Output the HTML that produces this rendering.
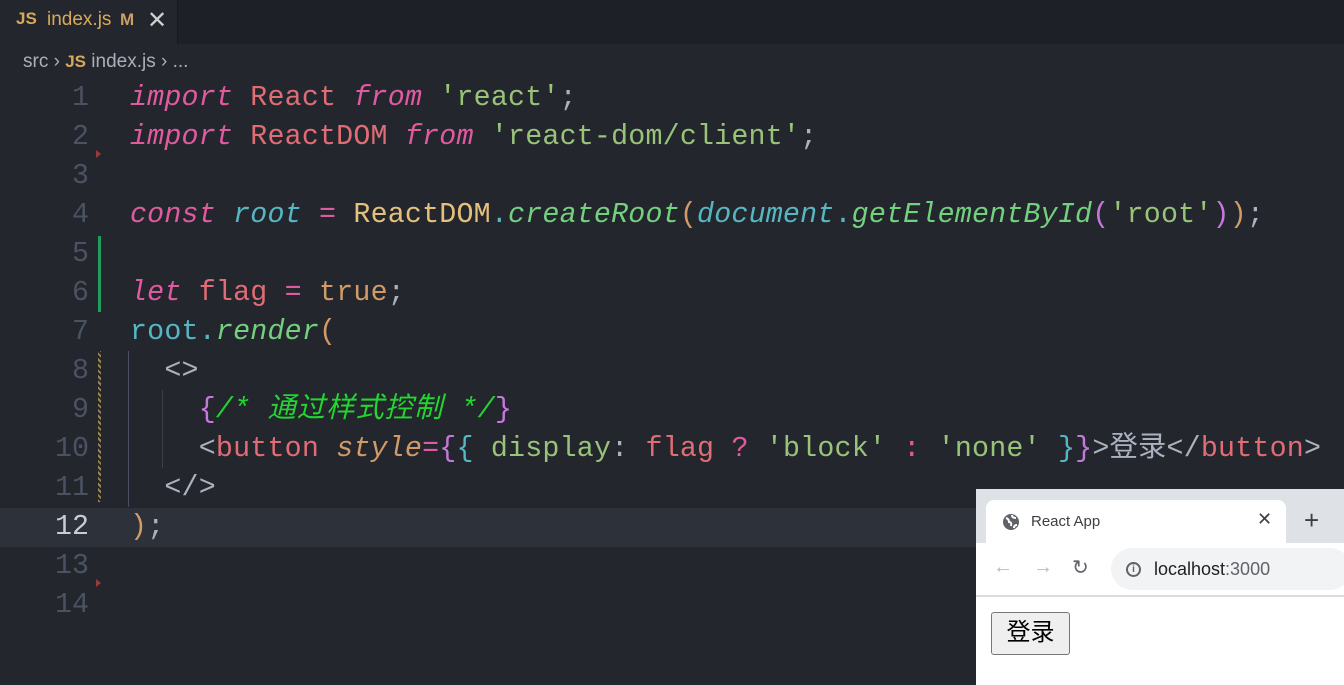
<!DOCTYPE html>
<html><head><meta charset="utf-8"><style>
*{margin:0;padding:0;box-sizing:border-box}
body{width:1344px;height:685px;background:#23262d;overflow:hidden;position:relative;font-family:"Liberation Sans","Noto Sans CJK SC",sans-serif}
.tabbar{position:absolute;left:0;top:0;width:1344px;height:44px;background:#1d2026}
.tab{position:absolute;left:0;top:0;width:178px;height:45px;background:#23262d;border-right:1px solid #181a1f;color:#d7a65f;font-size:19px}
.tab .js{position:absolute;left:16px;top:9px;font-weight:bold;color:#d9a95a;font-size:17px}
.tab .n{position:absolute;left:47px;top:9px;color:#d9a95a;font-size:19px}
.tab .m{position:absolute;left:120px;top:10px;font-weight:bold;color:#c8a068;font-size:17px}
.tab .x{position:absolute;left:147px;top:6px;color:#d0d0d0;font-size:24px}
.crumb{position:absolute;left:23px;top:51px;font-size:19px;color:#a9b0bb}
.crumb b{color:#d9a95a;font-size:17px}
.code{position:absolute;left:0;top:79px;width:1344px;font-family:"Liberation Mono","Noto Sans CJK SC",monospace;font-size:28.3px}
.ln{height:39px;line-height:39px;white-space:pre;position:relative}
.ln .num{position:absolute;left:0;width:89px;text-align:right;color:#4b5263;letter-spacing:0}
.ln .t{position:absolute;left:130px;color:#abb2bf;letter-spacing:0.2px}
.hl{background:#2c313a}
.hl .num{color:#c8ccd4}
.k{color:#e05aa0;font-style:italic}.v{color:#e06c75}.s{color:#98c379}.c{color:#e5c07b}
.f{color:#72d07f;font-style:italic}.d{color:#56b6c2;font-style:italic}.r{color:#56b6c2}
.o{color:#d19a66}.p{color:#c678dd}.g{color:#abb2bf}.cm{color:#22d62f;font-style:italic}
.at{color:#d19a66;font-style:italic}.tg{color:#e06c75}.eq{color:#e05aa0}
.cj{letter-spacing:1px}
.browser{position:absolute;left:976px;top:489px;width:368px;height:196px;background:#fff}
</style></head><body>
<div class="tabbar"></div>
<div class="tab"><span class="js">JS</span><span class="n">index.js</span><span class="m">M</span><span class="x">✕</span></div>
<div class="crumb">src › <b>JS</b> index.js › ...</div>
<div style="position:absolute;left:98px;top:236px;width:3px;height:76px;background:#1f9d5c"></div>
<div style="position:absolute;left:98px;top:351px;width:3px;height:151px;background:repeating-linear-gradient(45deg,#9a8650 0 2px,#23262d 2px 4px)"></div>
<div style="position:absolute;left:128px;top:351px;width:1px;height:156px;background:#4b5060"></div>
<div style="position:absolute;left:162px;top:390px;width:1px;height:78px;background:#3b3f4a"></div>
<div style="position:absolute;left:96px;top:150px;width:0;height:0;border-left:5px solid #9b3a3a;border-top:4px solid transparent;border-bottom:4px solid transparent"></div>
<div style="position:absolute;left:96px;top:579px;width:0;height:0;border-left:5px solid #9b3a3a;border-top:4px solid transparent;border-bottom:4px solid transparent"></div>
<div class="code">
<div class="ln"><span class="num">1</span><span class="t"><span class="k">import</span> <span class="v">React</span> <span class="k">from</span> <span class="s">'react'</span>;</span></div>
<div class="ln"><span class="num">2</span><span class="t"><span class="k">import</span> <span class="v">ReactDOM</span> <span class="k">from</span> <span class="s">'react-dom/client'</span>;</span></div>
<div class="ln"><span class="num">3</span></div>
<div class="ln"><span class="num">4</span><span class="t"><span class="k">const</span> <span class="d">root</span> <span class="eq">=</span> <span class="c">ReactDOM</span><span class="r">.</span><span class="f">createRoot</span><span class="o">(</span><span class="d">document</span><span class="r">.</span><span class="f">getElementById</span><span class="p">(</span><span class="s">'root'</span><span class="p">)</span><span class="o">)</span>;</span></div>
<div class="ln"><span class="num">5</span></div>
<div class="ln"><span class="num">6</span><span class="t"><span class="k">let</span> <span class="v">flag</span> <span class="eq">=</span> <span class="o">true</span>;</span></div>
<div class="ln"><span class="num">7</span><span class="t"><span class="r">root</span><span class="r">.</span><span class="f">render</span><span class="o">(</span></span></div>
<div class="ln"><span class="num">8</span><span class="t">  <span class="g">&lt;&gt;</span></span></div>
<div class="ln"><span class="num">9</span><span class="t">    <span class="p">{</span><span class="cm">/* <span class="cj">通过样式控制</span> */</span><span class="p">}</span></span></div>
<div class="ln"><span class="num">10</span><span class="t">    <span class="g">&lt;</span><span class="tg">button</span> <span class="at">style</span><span class="eq">=</span><span class="p">{</span><span class="r">{</span> <span class="s">display</span><span class="g">:</span> <span class="v">flag</span> <span class="eq">?</span> <span class="s">'block'</span> <span class="eq">:</span> <span class="s">'none'</span> <span class="r">}</span><span class="p">}</span><span class="g">&gt;</span>登录<span class="g">&lt;/</span><span class="tg">button</span><span class="g">&gt;</span></span></div>
<div class="ln"><span class="num">11</span><span class="t">  <span class="g">&lt;/&gt;</span></span></div>
<div class="ln hl"><span class="num">12</span><span class="t"><span class="o">)</span>;</span></div>
<div class="ln"><span class="num">13</span></div>
<div class="ln"><span class="num">14</span></div>
</div>
<div class="browser">
<div style="position:absolute;left:0;top:0;width:368px;height:54px;background:#dee1e6"></div>
<div style="position:absolute;left:10px;top:11px;width:300px;height:44px;background:#fff;border-radius:8px 8px 0 0"></div>
<svg style="position:absolute;left:26px;top:24px" width="18" height="18" viewBox="0 0 18 18"><circle cx="9" cy="9" r="8" fill="#5f6368"/><path d="M4 5 q3 1 3 4 q3 0 2 4 M10 2 q0 3 4 3 M12 15 q0-3 3-3" stroke="#fff" stroke-width="2" fill="none"/></svg>
<div style="position:absolute;left:55px;top:24px;font-size:15px;color:#3c4043">React App</div>
<div style="position:absolute;left:281px;top:20px;font-size:18px;color:#3c4043">✕</div>
<div style="position:absolute;left:328px;top:16px;font-size:26px;color:#3c4043">+</div>
<div style="position:absolute;left:17px;top:67px;font-size:20px;color:#bbb">←</div>
<div style="position:absolute;left:57px;top:67px;font-size:20px;color:#bbb">→</div>
<div style="position:absolute;left:96px;top:66px;font-size:20px;color:#5f6368">↻</div>
<div style="position:absolute;left:135px;top:59px;width:240px;height:42px;background:#f1f3f4;border-radius:21px"></div>
<div style="position:absolute;left:150px;top:73px;width:15px;height:15px;border:2px solid #5f6368;border-radius:50%;font-size:10px;text-align:center;line-height:11px;color:#5f6368;font-weight:bold">i</div>
<div style="position:absolute;left:178px;top:70px;font-size:18px;color:#202124">localhost<span style="color:#5f6368">:3000</span></div>
<div style="position:absolute;left:0;top:106px;width:368px;height:2px;background:#dadce0"></div>
<div style="position:absolute;left:15px;top:123px;width:79px;height:43px;border:1px solid #767676;border-radius:3px;background:#efefef;font-size:24px;text-align:center;line-height:40px;color:#000">登录</div>
</div>
</body></html>
